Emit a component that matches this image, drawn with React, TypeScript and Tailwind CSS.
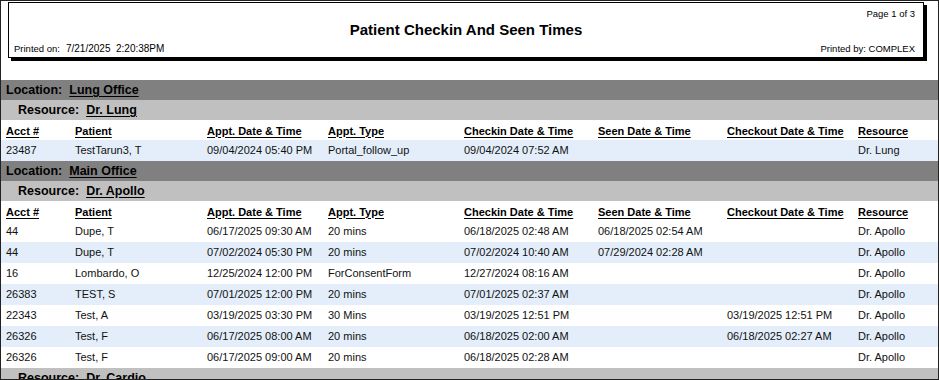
const COLS = "grid grid-cols-[69px_132px_121px_136px_134px_129px_131px_1fr] pl-[5px]";

interface Appt {
  acct: string;
  patient: string;
  appt: string;
  type: string;
  checkin: string;
  seen: string;
  checkout: string;
  resource: string;
  shaded: boolean;
}

const headers = [
  "Acct #",
  "Patient",
  "Appt. Date & Time",
  "Appt. Type",
  "Checkin Date & Time",
  "Seen Date & Time",
  "Checkout Date & Time",
  "Resource",
];

const lungRows: Appt[] = [
  { acct: "23487", patient: "TestTarun3, T", appt: "09/04/2024 05:40 PM", type: "Portal_follow_up", checkin: "09/04/2024 07:52 AM", seen: "", checkout: "", resource: "Dr. Lung", shaded: true },
];

const apolloRows: Appt[] = [
  { acct: "44", patient: "Dupe, T", appt: "06/17/2025 09:30 AM", type: "20 mins", checkin: "06/18/2025 02:48 AM", seen: "06/18/2025 02:54 AM", checkout: "", resource: "Dr. Apollo", shaded: false },
  { acct: "44", patient: "Dupe, T", appt: "07/02/2024 05:30 PM", type: "20 mins", checkin: "07/02/2024 10:40 AM", seen: "07/29/2024 02:28 AM", checkout: "", resource: "Dr. Apollo", shaded: true },
  { acct: "16", patient: "Lombardo, O", appt: "12/25/2024 12:00 PM", type: "ForConsentForm", checkin: "12/27/2024 08:16 AM", seen: "", checkout: "", resource: "Dr. Apollo", shaded: false },
  { acct: "26383", patient: "TEST, S", appt: "07/01/2025 12:00 PM", type: "20 mins", checkin: "07/01/2025 02:37 AM", seen: "", checkout: "", resource: "Dr. Apollo", shaded: true },
  { acct: "22343", patient: "Test, A", appt: "03/19/2025 03:30 PM", type: "30 Mins", checkin: "03/19/2025 12:51 PM", seen: "", checkout: "03/19/2025 12:51 PM", resource: "Dr. Apollo", shaded: false },
  { acct: "26326", patient: "Test, F", appt: "06/17/2025 08:00 AM", type: "20 mins", checkin: "06/18/2025 02:00 AM", seen: "", checkout: "06/18/2025 02:27 AM", resource: "Dr. Apollo", shaded: true },
  { acct: "26326", patient: "Test, F", appt: "06/17/2025 09:00 AM", type: "20 mins", checkin: "06/18/2025 02:28 AM", seen: "", checkout: "", resource: "Dr. Apollo", shaded: false },
];

function LocationBar({ name }: { name: string }) {
  return (
    <div className="h-[20px] bg-[#808080] flex items-center pl-[5px] text-[12.5px] font-bold text-black">
      <span>Location:</span>
      <span className="ml-[7px] underline underline-offset-2">{name}</span>
    </div>
  );
}

function ResourceBar({ name }: { name: string }) {
  return (
    <div className="h-[20px] bg-[#c0c0c0] flex items-center pl-[17px] text-[12.5px] font-bold text-black">
      <span>Resource:</span>
      <span className="ml-[7px] underline underline-offset-2">{name}</span>
    </div>
  );
}

function HeaderRow() {
  return (
    <div className={`${COLS} h-[20px] items-center pt-[2px] text-[11px] font-bold text-black`}>
      {headers.map((h) => (
        <span key={h} className="underline underline-offset-2 whitespace-nowrap">{h}</span>
      ))}
    </div>
  );
}

function DataRow({ row }: { row: Appt }) {
  return (
    <div className={`${COLS} h-[21px] items-center text-[11px] text-[#111] ${row.shaded ? "bg-[#e3eefa]" : "bg-white"}`}>
      <span>{row.acct}</span>
      <span>{row.patient}</span>
      <span className="whitespace-nowrap">{row.appt}</span>
      <span>{row.type}</span>
      <span className="whitespace-nowrap">{row.checkin}</span>
      <span className="whitespace-nowrap">{row.seen}</span>
      <span className="whitespace-nowrap">{row.checkout}</span>
      <span className="whitespace-nowrap">{row.resource}</span>
    </div>
  );
}

export default function App() {
  return (
    <div
      className="w-[939px] h-[380px] overflow-hidden border border-[#222] bg-white text-black"
      style={{ fontFamily: '"Liberation Sans", Arial, sans-serif' }}
    >
      {/* report header */}
      <div className="ml-[7px] mt-[1px] w-[916px] h-[56px] border border-black shadow-[3px_3px_0_#000] flex flex-col px-[5px]">
        <div className="flex justify-end pt-[5px] pr-[3px] text-[9.5px] leading-[12px]">Page 1 of 3</div>
        <div className="text-center text-[15px] font-bold leading-[18px] mt-[1px]">Patient Checkin And Seen Times</div>
        <div className="flex justify-between items-end mt-auto pb-[2px] pr-[3px] text-[9.5px] leading-[12px]">
          <div>
            <span>Printed on:</span>
            <span className="ml-[6px] text-[10px]">7/21/2025&nbsp;&nbsp;2:20:38PM</span>
          </div>
          <span>Printed by: COMPLEX</span>
        </div>
      </div>

      <div className="mt-[22px]">
        <LocationBar name="Lung Office" />
        <ResourceBar name="Dr. Lung" />
        <HeaderRow />
        {lungRows.map((r, i) => (
          <DataRow key={i} row={r} />
        ))}

        <LocationBar name="Main Office" />
        <ResourceBar name="Dr. Apollo" />
        <HeaderRow />
        {apolloRows.map((r, i) => (
          <DataRow key={i} row={r} />
        ))}

        <ResourceBar name="Dr. Cardio" />
      </div>
    </div>
  );
}
